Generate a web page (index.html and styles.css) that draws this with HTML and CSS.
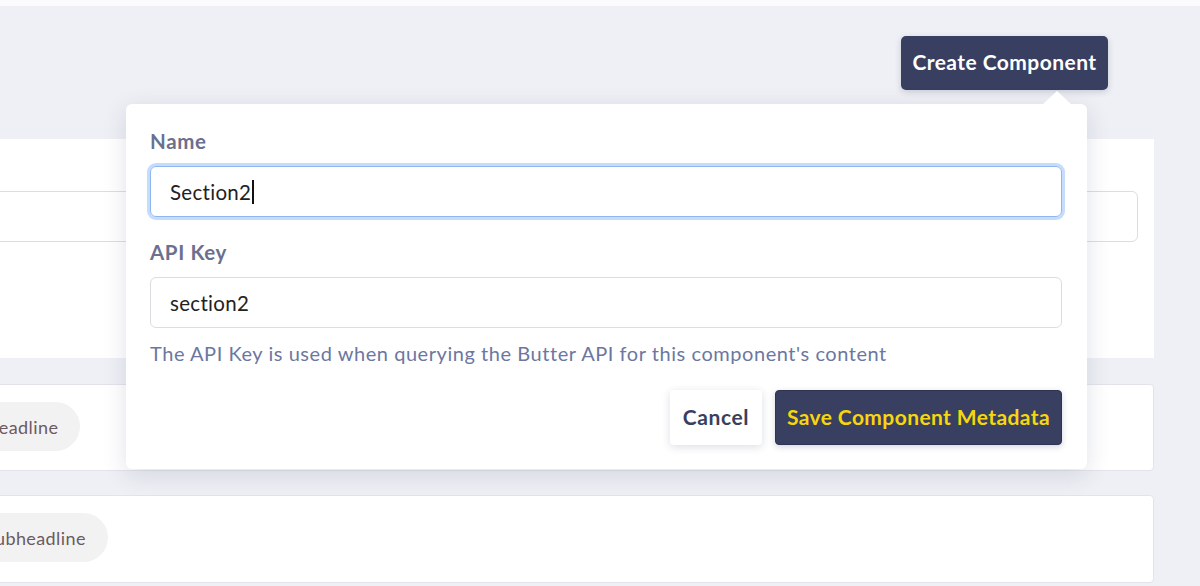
FILE: index.html
```html
<!DOCTYPE html>
<html lang="en">
<head>
<meta charset="utf-8">
<title>Create Component</title>
<link rel="stylesheet" href="styles.css">
</head>
<body>
<div class="topstrip"></div>
<div class="page">
  <div class="toolbar">
    <button class="btn-create">Create Component</button>
  </div>
  <div class="cards">
    <section class="card card-form">
      <div class="field-input"></div>
    </section>
    <section class="card card-row">
      <span class="chip">Headline</span>
    </section>
    <section class="card card-row">
      <span class="chip">Subheadline</span>
    </section>
  </div>

  <div class="popover">
    <div class="arrow"></div>
    <label class="label">Name</label>
    <div class="input focused"><span class="value">Section2</span><span class="caret"></span></div>
    <label class="label label-api">API Key</label>
    <div class="input"><span class="value">section2</span></div>
    <p class="help">The API Key is used when querying the Butter API for this component's content</p>
    <div class="actions">
      <button class="btn-cancel">Cancel</button>
      <button class="btn-save">Save Component Metadata</button>
    </div>
  </div>
</div>
</body>
</html>
```

FILE: styles.css
```css
* { box-sizing: border-box; }
html, body { margin: 0; padding: 0; }
body {
  background: #eff0f5;
  font-family: "Lato", "Noto Sans", sans-serif;
  width: 1200px;
  height: 586px;
  overflow: hidden;
}
.topstrip { height: 6px; background: #fbfbfd; }
.page { position: relative; }
.toolbar {
  display: flex;
  justify-content: flex-end;
  padding: 30px 92px 0 0;
  height: 133px;
}
.btn-create {
  height: 54px;
  width: 207px;
  padding: 0 0 3px;
  background: #393f61;
  color: #fff;
  border: none;
  border-radius: 5px;
  font-family: inherit;
  font-weight: 700;
  font-size: 21px;
  letter-spacing: 0.45px;
  box-shadow: 0 2px 6px rgba(40, 50, 90, 0.2);
}
.cards {
  margin-left: -200px;
  width: 1354px;
  display: flex;
  flex-direction: column;
}
.card {
  background: #fff;
}
.card-form {
  height: 219px;
  padding: 52px 16px 0 0;
}
.field-input {
  height: 51px;
  border: 1px solid #dcdde3;
  border-radius: 6px;
}
.card-row {
  border: 1px solid #e3e4ea;
  border-radius: 4px;
  padding: 17px 0 0 162px;
}
.card-row:nth-child(2) { margin-top: 26px; height: 87px; }
.card-row:nth-child(3) { margin-top: 24px; height: 88px; }
.chip {
  display: inline-flex;
  align-items: center;
  height: 49px;
  padding: 0 22px;
  border-radius: 25px;
  background: #f3f2f3;
  color: #6b5a62;
  font-size: 18px;
  letter-spacing: 0.4px;
}

.popover {
  position: absolute;
  left: 126px;
  top: 98px;
  width: 961px;
  height: 365px;
  background: #fff;
  border-radius: 6px;
  box-shadow: 0 6px 24px rgba(40, 50, 100, 0.14);
  padding: 25px 25px 24px 24px;
  display: flex;
  flex-direction: column;
}
.arrow {
  position: absolute;
  top: -13px;
  left: 916px;
  width: 0; height: 0;
  border-left: 15px solid transparent;
  border-right: 15px solid transparent;
  border-bottom: 14px solid #fff;
}
.label {
  display: block;
  font-weight: 700;
  font-size: 20.5px;
  letter-spacing: 0.6px;
  line-height: 24px;
  color: #6a7090;
}
.label-api { margin-top: 23px; }
.input {
  margin-top: 13px;
  height: 51px;
  border: 1px solid #dcdde3;
  border-radius: 6px;
  display: flex;
  align-items: center;
  padding-left: 19px;
  font-size: 20.5px;
  letter-spacing: 0.3px;
  color: #222;
}
.input.focused {
  border-color: #8fb7f5;
  box-shadow: 0 0 0 3px #c6dcfb;
}
.caret {
  display: inline-block;
  width: 1.5px;
  height: 24px;
  background: #111;
  margin-left: 1px;
}
.help {
  margin: 13px 0 0;
  font-size: 20px;
  letter-spacing: 0.55px;
  line-height: 24px;
  color: #6c77a1;
}
.actions {
  margin-top: auto;
  display: flex;
  justify-content: flex-end;
  gap: 13px;
}
.actions button {
  height: 55px;
  border-radius: 4px;
  padding: 0 0 2px;
  font-family: inherit;
  font-weight: 700;
  font-size: 21px;
}
.btn-cancel {
  width: 92px;
  background: #fff;
  color: #393f61;
  border: none;
  letter-spacing: 0.6px;
  box-shadow: 0 2px 8px rgba(40, 50, 100, 0.16);
}
.btn-save {
  width: 287px;
  background: #393f61;
  color: #f6d70c;
  border: 1px solid #2e3452;
  letter-spacing: 0.4px;
  box-shadow: 0 2px 6px rgba(40, 50, 100, 0.2);
}
```
